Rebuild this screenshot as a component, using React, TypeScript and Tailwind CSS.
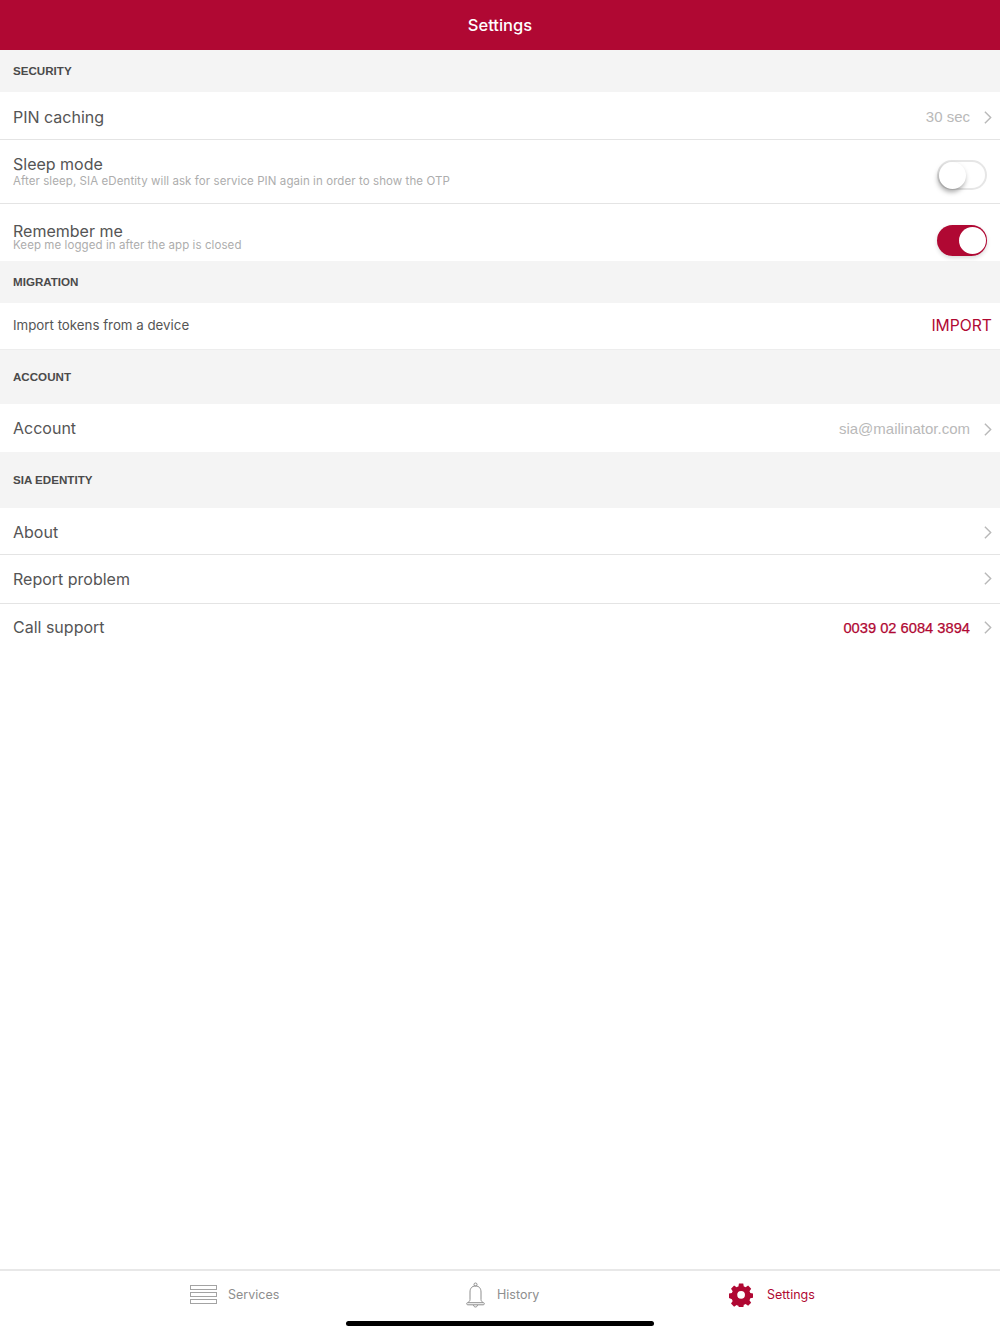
import type { ReactNode } from 'react';

const inter = 'font-["Inter",sans-serif]';
const helvetica = 'font-["Liberation_Sans",sans-serif]';

function SectionHeader({ title, height }: { title: string; height: string }) {
  return (
    <div className={`flex items-center bg-[#f4f4f4] pl-[13px] ${height}`}>
      <span className={`${helvetica} text-[11.6px] font-bold text-[#4a4a4a]`}>{title}</span>
    </div>
  );
}

function Chevron() {
  return (
    <svg viewBox="0 0 9 15" className="ml-[14px] mr-[8px] h-[15px] w-[8px]" fill="none" stroke="#b9b9b9" strokeWidth="1.6">
      <path d="M1 1l6.500 6.500L1 14" />
    </svg>
  );
}

function Row({ label, height, border, pad, labelPad, children }: { label: string; height: string; border?: boolean; pad?: string; labelPad?: string; children?: ReactNode }) {
  return (
    <div className={`flex items-center justify-between bg-white pl-[13px] ${height} ${pad ?? ''} ${border ? 'border-b border-[#e4e4e4]' : ''}`}>
      <span className={`${inter} text-[16px] text-[#555555] ${labelPad ?? ''}`}>{label}</span>
      <div className="flex items-center">{children}</div>
    </div>
  );
}

function Toggle({ on }: { on: boolean }) {
  if (on) {
    return (
      <div className="mr-[13px] flex h-[31px] w-[50px] items-center justify-end rounded-full bg-[#b00833] pr-[1px] shadow-[0_2px_4px_rgba(0,0,0,0.15)]">
        <div className="h-[27px] w-[27px] rounded-full bg-white" />
      </div>
    );
  }
  return (
    <div className="mr-[13px] flex h-[30px] w-[50px] items-center rounded-full border-2 border-[#e6e6e6] bg-white">
      <div className="h-[27px] w-[27px] rounded-full bg-white shadow-[-1px_3px_5px_rgba(0,0,0,0.35)]" />
    </div>
  );
}

function ToggleRow({ label, hint, height, border, on, hintLeading, pt }: { label: string; hint: string; height: string; border?: boolean; on: boolean; hintLeading: string; pt: string }) {
  return (
    <div className={`flex justify-between bg-white pl-[13px] ${height} ${border ? 'border-b border-[#e4e4e4]' : ''}`}>
      <div className={`flex flex-col ${pt}`}>
        <span className={`${inter} text-[16px] leading-[16px] text-[#555555]`}>{label}</span>
        <span className={`${inter} text-[11.5px] tracking-[0.08px] text-[#adadad] ${hintLeading}`}>{hint}</span>
      </div>
      <div className={on ? 'pt-[21px]' : 'pt-[20px]'}>
        <Toggle on={on} />
      </div>
    </div>
  );
}

function TabItem({ icon, label, active, width }: { icon: ReactNode; label: string; active?: boolean; width: string }) {
  return (
    <div className={`flex h-[26px] items-center ${width}`}>
      {icon}
      <span className={`${inter} text-[12.5px] ${active ? 'text-[#b00833]' : 'text-[#8e8e8e]'}`}>{label}</span>
    </div>
  );
}

export default function App() {
  return (
    <div className="flex h-[1334px] flex-col bg-white">
      <header className="flex h-[50px] items-center justify-center bg-[#b00833] pt-[1px]">
        <h1 className={`${inter} text-[16.500px] font-medium text-white`}>Settings</h1>
      </header>

      <main className="flex-1">
        <SectionHeader title="SECURITY" height="h-[42px]" />
        <Row label="PIN caching" height="h-[48px]" pad="pt-[3px]" border>
          <span className={`${helvetica} text-[15px] text-[#b9b9b9]`}>30 sec</span>
          <Chevron />
        </Row>
        <ToggleRow
          label="Sleep mode"
          hint="After sleep, SIA eDentity will ask for service PIN again in order to show the OTP"
          height="h-[64px]"
          border
          on={false}
          hintLeading="leading-[18px]"
          pt="pt-[16px]"
        />
        <ToggleRow
          label="Remember me"
          hint="Keep me logged in after the app is closed"
          height="h-[57px]"
          on
          hintLeading="leading-[12px]"
          pt="pt-[19px]"
        />
        <SectionHeader title="MIGRATION" height="h-[42px]" />
        <div className="flex h-[47px] items-center justify-between border-b border-[#ededed] bg-white pl-[13px] pr-[8px]">
          <span className={`${inter} text-[13.300px] text-[#555555]`}>Import tokens from a device</span>
          <span className={`${inter} text-[15.700px] text-[#b00833]`}>IMPORT</span>
        </div>
        <SectionHeader title="ACCOUNT" height="h-[54px]" />
        <Row label="Account" height="h-[48px]" pad="pt-[2px]" labelPad="pb-[2px]">
          <span className={`${helvetica} text-[15px] text-[#b9b9b9]`}>sia@mailinator.com</span>
          <Chevron />
        </Row>
        <SectionHeader title="SIA EDENTITY" height="h-[56px]" />
        <Row label="About" height="h-[47px]" pad="pt-[2px]" border>
          <Chevron />
        </Row>
        <Row label="Report problem" height="h-[49px]" pad="pb-[1px]" border>
          <Chevron />
        </Row>
        <Row label="Call support" height="h-[48px]" labelPad="pb-[2px]">
          <span className={`${helvetica} text-[14.700px] text-[#b00833] [-webkit-text-stroke:0.25px_#b00833]`}>0039 02 6084 3894</span>
          <Chevron />
        </Row>
      </main>

      <nav className="flex h-[65px] flex-col border-t-2 border-[#e8e8e8] bg-white">
        <div className="mt-[11px] flex pl-[190px]">
          <TabItem
            width="w-[276px]"
            label="Services"
            icon={
              <svg viewBox="0 0 27 20" className="mr-[11px] h-[20px] w-[27px]" fill="none" stroke="#a3a3a3" strokeWidth="1">
                <rect x="0.5" y="0.5" width="26" height="4" />
                <rect x="0.5" y="7.5" width="26" height="4" />
                <rect x="0.5" y="14.5" width="26" height="4" />
              </svg>
            }
          />
          <TabItem
            width="w-[263px]"
            label="History"
            icon={
              <svg viewBox="0 0 19 26" className="mr-[12px] h-[26px] w-[19px]" fill="none" stroke="#8e8e8e" strokeWidth="1">
                <circle cx="9.5" cy="2.5" r="1.5" />
                <path d="M9.500 4c-3.800 0-5.500 2.600-5.500 6v7.500c0 1.600-1 2.400-2.500 3.200h16c-1.500-.8-2.500-1.600-2.500-3.200V10c0-3.400-1.700-6-5.500-6z" />
                <path d="M1 20.800c-.6.8-.4 2 .8 2h15.400c1.200 0 1.400-1.200.8-2" />
                <path d="M7.500 23c.2 1.400 1 2 2 2s1.800-.6 2-2" />
              </svg>
            }
          />
          <TabItem
            width="w-[120px]"
            label="Settings"
            active
            icon={
              <svg viewBox="0 0 24 24" className="mr-[14px] h-[24px] w-[24px]" fill="#b00833">
                <path
                  fillRule="evenodd"
                  d="M9.600 0h4.800l.6 3.300c.7.2 1.400.5 2 .9l2.800-1.900 3.400 3.400-1.900 2.800c.4.6.7 1.300.9 2l3.300.6v4.800l-3.300.6c-.2.7-.5 1.400-.9 2l1.900 2.800-3.400 3.400-2.800-1.900c-.6.4-1.300.7-2 .9l-.6 3.300H9.600L9 24.700c-.7-.2-1.400-.5-2-.9l-2.800 1.900-3.400-3.400 1.900-2.800c-.4-.6-.7-1.300-.9-2L-1.500 16v-4.800l3.300-.6c.2-.7.5-1.400.9-2L.8 5.700l3.400-3.400L7 4.200c.6-.4 1.300-.7 2-.9zM12 8.300a4.300 4.300 0 1 0 0 8.600A4.300 4.300 0 0 0 12 8.300z"
                  transform="translate(1.3 0.5) scale(0.9 0.9)"
                />
              </svg>
            }
          />
        </div>
        <div className="mx-auto mt-[13px] h-[5px] w-[308px] rounded-full bg-black" />
      </nav>
    </div>
  );
}
